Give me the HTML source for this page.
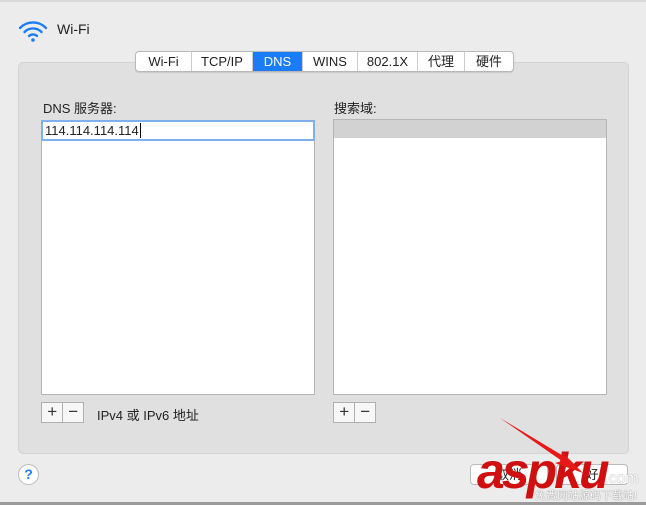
<!DOCTYPE html>
<html><head><meta charset="utf-8"><style>
*{margin:0;padding:0;box-sizing:border-box}
body{width:646px;height:505px;background:#ececec;font-family:"Liberation Sans","Noto Sans CJK SC",sans-serif;font-size:13px;color:#222;position:relative;overflow:hidden}
.a{position:absolute}
.panel{left:18px;top:62px;width:611px;height:392px;background:#e0e0e0;border:1px solid #d3d3d3;border-radius:5px}
.tabs{left:135px;top:51px;height:21px;display:flex;background:#fff;border:1px solid #b8b8b8;border-radius:4px;overflow:hidden;box-shadow:0 1px 1px rgba(0,0,0,.1)}
.tabs div{height:19px;line-height:19px;text-align:center;border-left:1px solid #ccc;font-size:13px}
.tabs div:first-child{border-left:none}
.tabs .on{background:#1b7cf7;color:#fff}
.list{background:#fff;border:1px solid #b5b5b5}
.btn{width:43px;height:21px;border:1px solid #b0b0b0;background:#f7f7f7;display:flex}
.btn div{width:21px;text-align:center;line-height:18px;font-size:17px;color:#333}
.btn div+div{border-left:1px solid #b0b0b0}
</style></head><body>
<div class="a" style="left:0;top:0;width:646px;height:2px;background:#d8d8d8"></div>
<svg class="a" style="left:18px;top:20px" width="30" height="22" viewBox="0 0 30 22">
<g fill="none" stroke="#1b7cf7" stroke-width="2.4" stroke-linecap="round">
<path d="M2 8 A18 18 0 0 1 28 8"/><path d="M6.5 12 A12 12 0 0 1 23.5 12"/><path d="M11 16 A6 6 0 0 1 19 16"/></g>
<circle cx="15" cy="20" r="1.8" fill="#1b7cf7"/></svg>
<div class="a" style="left:57px;top:21px;font-size:14px">Wi-Fi</div>
<div class="a panel"></div>
<div class="a tabs">
<div style="width:55px">Wi-Fi</div><div style="width:61px">TCP/IP</div><div class="on" style="width:50px">DNS</div><div style="width:55px">WINS</div><div style="width:60px">802.1X</div><div style="width:47px">代理</div><div style="width:49px">硬件</div>
</div>
<div class="a" style="left:43px;top:98px">DNS 服务器:</div>
<div class="a list" style="left:41px;top:120px;width:274px;height:275px"></div>
<div class="a" style="left:41px;top:120px;width:274px;height:21px;border:2px solid #7fb0ee;background:#fff;padding-left:2px;line-height:17px;font-size:13px">114.114.114.114<span style="border-left:1px solid #000;margin-left:1px"></span></div>
<div class="a" style="left:334px;top:98px">搜索域:</div>
<div class="a list" style="left:333px;top:119px;width:274px;height:276px"></div>
<div class="a" style="left:334px;top:120px;width:272px;height:18px;background:#d2d2d2"></div>
<div class="a btn" style="left:41px;top:402px"><div>+</div><div>−</div></div>
<div class="a" style="left:97px;top:405px">IPv4 或 IPv6 地址</div>
<div class="a btn" style="left:333px;top:402px"><div>+</div><div>−</div></div>
<div class="a" style="left:18px;top:464px;width:21px;height:21px;border-radius:50%;background:#fff;border:1px solid #bbb;color:#1b7cf7;text-align:center;line-height:19px;font-weight:bold;font-size:14px">?</div>
<div class="a" style="left:470px;top:464px;width:78px;height:21px;background:#fff;border:1px solid #bbb;border-radius:4px;text-align:center;line-height:19px">取消</div>
<div class="a" style="left:556px;top:464px;width:72px;height:21px;background:#fff;border:1px solid #bbb;border-radius:4px;text-align:center;line-height:19px">好</div>
<div class="a" style="left:0;top:502px;width:646px;height:3px;background:#9a9a9a"></div>
<div class="a" style="left:477px;top:446px;font-size:50px;font-weight:bold;font-style:italic;color:#d01010;letter-spacing:-3px;line-height:50px;font-family:'Liberation Sans',sans-serif">aspku</div>
<svg class="a" style="left:495px;top:415px" width="90" height="65"><path d="M5 3 L70 42 L66 36 L88 58 L60 48 L67 46 Z" fill="#e81818"/></svg>
<div class="a" style="left:604px;top:470px;font-size:16px;color:#fff;text-shadow:0 0 1px #666">.com</div>
<div class="a" style="left:535px;top:487px;font-size:11px;color:#fff;text-shadow:0 0 1px #555">免费网站源码下载站!</div>
</body></html>
